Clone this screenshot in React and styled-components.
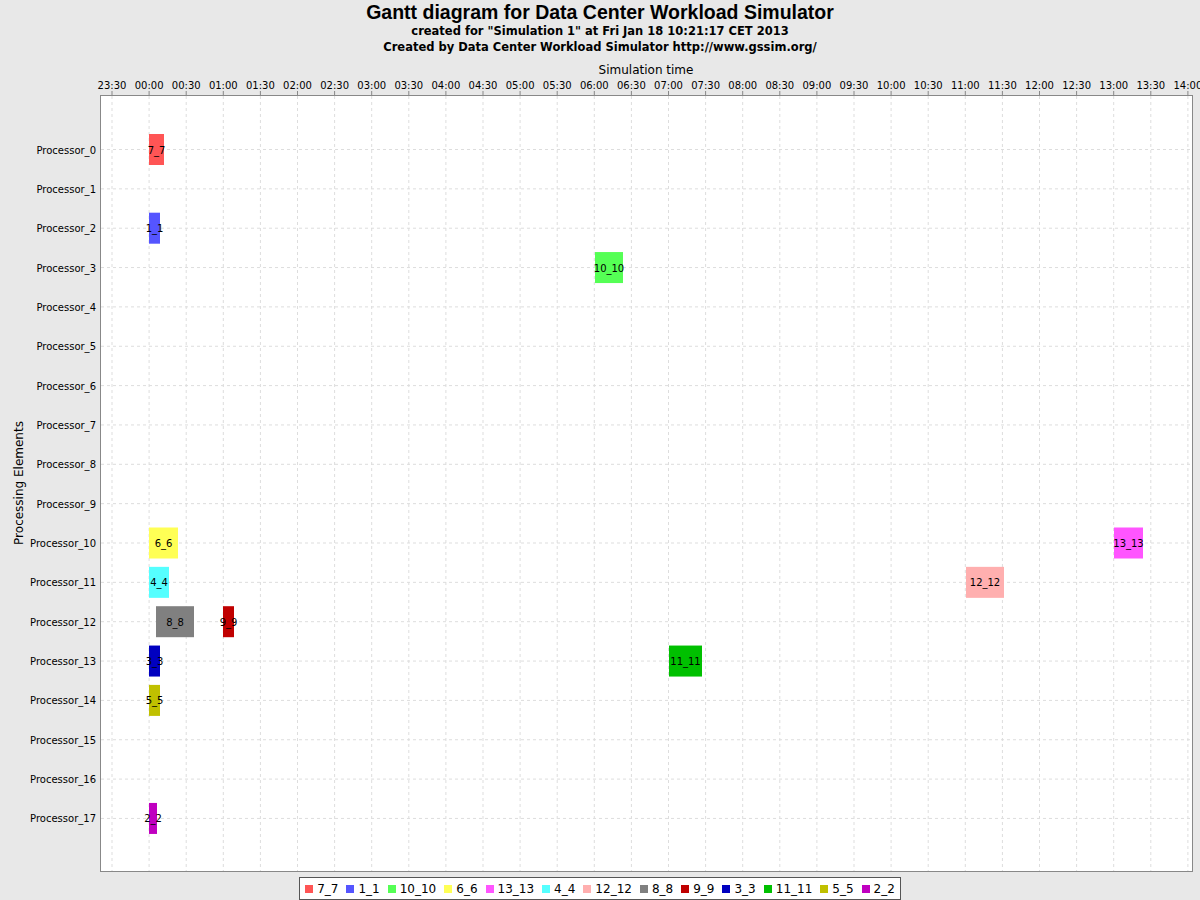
import React from 'react'
import styled, { createGlobalStyle } from 'styled-components'

const Global = createGlobalStyle`
  body { margin: 0; background: #e8e8e8; font-family: 'Liberation Sans', Arial, sans-serif; }
`

const Page = styled.div`
  width: 1200px;
  height: 900px;
  display: flex;
  flex-direction: column;
  align-items: center;
  overflow: hidden;
`

const Header = styled.header`
  height: 60px;
  display: flex;
  flex-direction: column;
  align-items: center;
`

const Title = styled.h1`
  margin: 2px 0 0;
  font-size: 19.5px;
  font-weight: bold;
  line-height: 21px;
`

const Sub = styled.div`
  font-family: 'DejaVu Sans', sans-serif;
  font-size: 11.5px;
  font-weight: bold;
  line-height: 16px;
`

const Legend = styled.div`
  display: flex;
  align-items: center;
  gap: 8px;
  border: 1px solid #555;
  background: #fff;
  padding: 2px 5px;
  margin-top: 5px;
  height: 17px;
  font-family: 'DejaVu Sans', sans-serif;
  font-size: 12px;
`

const Item = styled.span`
  display: flex;
  align-items: center;
  gap: 4px;
`

const Swatch = styled.span`
  width: 8px;
  height: 8px;
  background: ${p => p.color};
`

const ticks = ['23:30','00:00','00:30','01:00','01:30','02:00','02:30','03:00','03:30','04:00','04:30','05:00','05:30','06:00','06:30','07:00','07:30','08:00','08:30','09:00','09:30','10:00','10:30','11:00','11:30','12:00','12:30','13:00','13:30','14:00']

const bars = [
  ['7_7', '#ff5555', 0, 149, 164],
  ['1_1', '#5555ff', 2, 149, 160],
  ['10_10', '#55ff55', 3, 595, 623],
  ['6_6', '#ffff55', 10, 149, 178],
  ['13_13', '#ff55ff', 10, 1114, 1143],
  ['4_4', '#55ffff', 11, 149, 169],
  ['12_12', '#ffafaf', 11, 966, 1004],
  ['8_8', '#808080', 12, 156, 194],
  ['9_9', '#c00000', 12, 223, 234],
  ['3_3', '#0000c0', 13, 149, 160],
  ['11_11', '#00c000', 13, 669, 702],
  ['5_5', '#c0c000', 14, 149, 160],
  ['2_2', '#c000c0', 17, 149, 157],
]

const legend = ['7_7','1_1','10_10','6_6','13_13','4_4','12_12','8_8','9_9','3_3','11_11','5_5','2_2']
const colorOf = n => bars.find(b => b[0] === n)[1]

const tx = i => 112 + i * 37.1
const ry = i => 149.5 + i * 39.35

function Chart() {
  return (
    <svg width="1200" height="812" viewBox="0 60 1200 812" style={{ display: 'block', fontFamily: 'DejaVu Sans, sans-serif' }}>
      <text x="646" y="74" fontSize="12" textAnchor="middle">Simulation time</text>
      <text transform="translate(23 483) rotate(-90)" fontSize="12" textAnchor="middle">Processing Elements</text>
      <rect x="100.5" y="95.5" width="1092" height="776" fill="#fff" stroke="#888" />
      {ticks.map((t, i) => (
        <g key={t + i}>
          <line x1={tx(i)} x2={tx(i)} y1="96" y2="871" stroke="#ddd" strokeDasharray="3 3" />
          <line x1={tx(i)} x2={tx(i)} y1="91" y2="95" stroke="#888" />
          <text x={tx(i)} y="89" fontSize="10" textAnchor="middle">{t}</text>
        </g>
      ))}
      {Array.from({ length: 18 }, (_, i) => (
        <g key={i}>
          <line x1="101" x2="1192" y1={ry(i)} y2={ry(i)} stroke="#ddd" strokeDasharray="3 3" />
          <text x="96" y={ry(i) + 4} fontSize="10" textAnchor="end">Processor_{i}</text>
        </g>
      ))}
      {bars.map(([n, c, r, a, b]) => (
        <g key={n}>
          <rect x={a} y={ry(r) - 15.5} width={b - a} height="31" fill={c} />
          <text x={(a + b) / 2} y={ry(r) + 4} fontSize="10" textAnchor="middle">{n}</text>
        </g>
      ))}
    </svg>
  )
}

export default function App() {
  return (
    <Page>
      <Global />
      <Header>
        <Title>Gantt diagram for Data Center Workload Simulator</Title>
        <Sub>created for "Simulation 1" at Fri Jan 18 10:21:17 CET 2013</Sub>
        <Sub>Created by Data Center Workload Simulator http://www.gssim.org/</Sub>
      </Header>
      <Chart />
      <Legend>
        {legend.map(n => (
          <Item key={n}><Swatch color={colorOf(n)} />{n}</Item>
        ))}
      </Legend>
    </Page>
  )
}
